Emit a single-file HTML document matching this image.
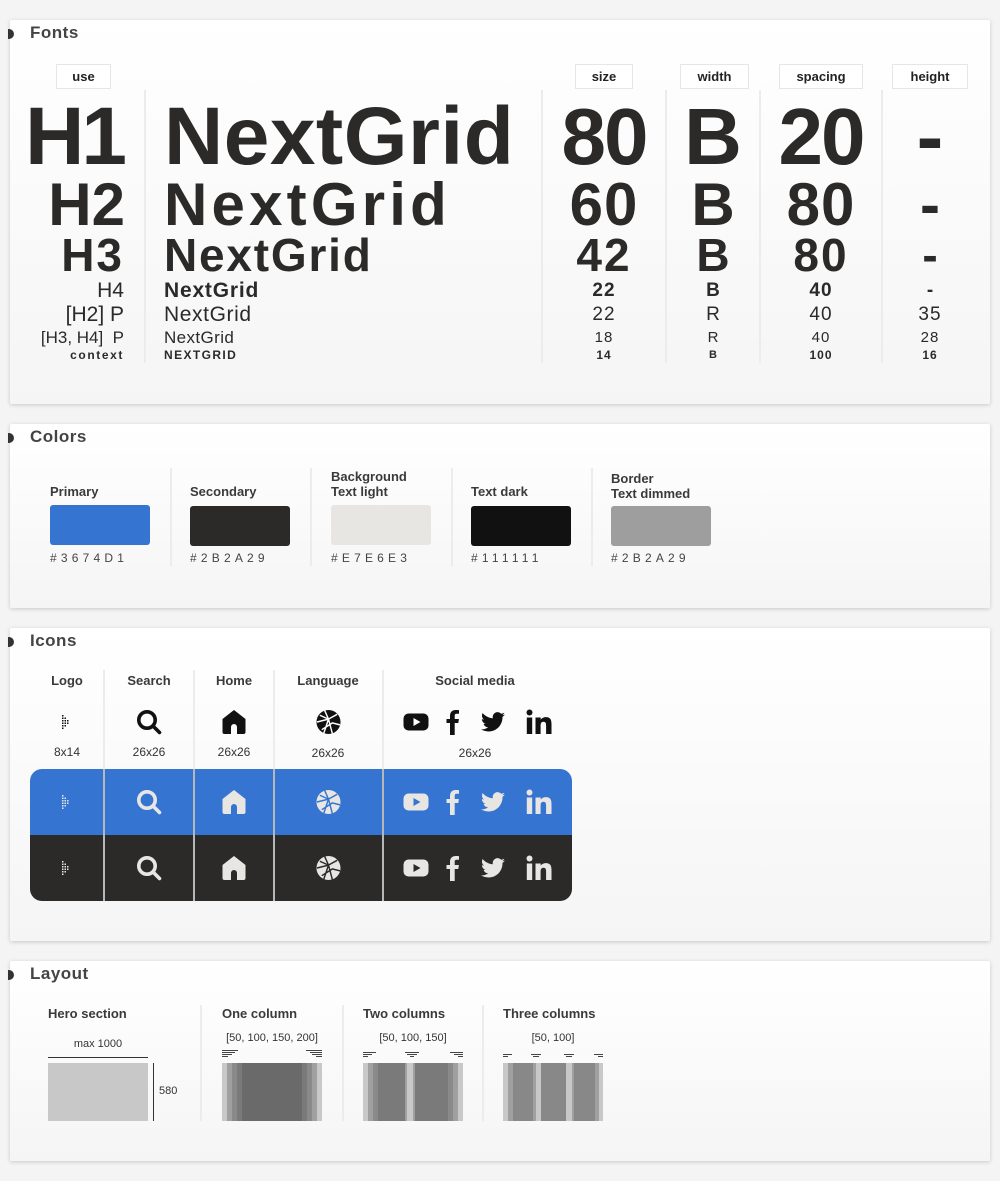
<!DOCTYPE html>
<html><head><meta charset="utf-8">
<style>
*{margin:0;padding:0;box-sizing:border-box}
body{width:1000px;height:1181px;background:#f4f4f4;font-family:"Liberation Sans",sans-serif;color:#2b2a29;position:relative;overflow:hidden}
.card{position:absolute;left:10px;width:980px;background:linear-gradient(#fff,#f5f5f5);box-shadow:0 1px 4px rgba(0,0,0,.18);border-radius:2px}
.ttl{position:absolute;left:20px;top:3px;font-size:17px;font-weight:bold;color:#444;letter-spacing:.5px}
.dot{position:absolute;left:-2px;top:9px;width:6px;height:10px;border-radius:0 5px 5px 0;background:#333}
.a{position:absolute;white-space:nowrap}
.tag{position:absolute;border:1px solid #e6e6e6;background:#fff;font-size:13px;font-weight:bold;text-align:center;line-height:23px;height:25px;color:#222}
.vl{position:absolute;width:2px;background:#ececec}
.b{font-weight:bold}
.r{text-align:right}
.c{text-align:center}
.lab{position:absolute;font-size:13px;font-weight:bold;color:#3a3a3a;line-height:15px}
.hex{position:absolute;font-size:12px;letter-spacing:4.2px;color:#444}
.sw{position:absolute;width:100px;height:40px;border-radius:3px}
.small{position:absolute;font-size:12px;color:#333;text-align:center}
svg{position:absolute}
</style></head><body>
<svg width="0" height="0" style="position:absolute">
<defs>
<symbol id="logo" viewBox="0 0 8 14"><g fill="currentColor"><rect x="0" y="0" width="1.5" height="1.5"/><rect x="0" y="2.5" width="1.5" height="1.5"/><rect x="0" y="5" width="1.5" height="1.5"/><rect x="0" y="7.5" width="1.5" height="1.5"/><rect x="0" y="10" width="1.5" height="1.5"/><rect x="0" y="12.5" width="1.5" height="1.5"/><rect x="2.5" y="2.5" width="1.5" height="1.5"/><rect x="2.5" y="5" width="1.5" height="1.5"/><rect x="2.5" y="7.5" width="1.5" height="1.5"/><rect x="2.5" y="10" width="1.5" height="1.5"/><rect x="5" y="5" width="1.5" height="1.5"/><rect x="5" y="7.5" width="1.5" height="1.5"/></g></symbol>
<symbol id="search" viewBox="0 0 26 26"><circle cx="11" cy="11" r="8.2" fill="none" stroke="currentColor" stroke-width="3.6"/><path d="M17 17l6.5 6.5" stroke="currentColor" stroke-width="3.6" stroke-linecap="round"/></symbol>
<symbol id="home" viewBox="0 0 26 26"><path fill="currentColor" d="M13 1L1.5 10V23a2 2 0 0 0 2 2h6.5v-7a3 3 0 0 1 6 0v7h6.5a2 2 0 0 0 2-2V10z"/></symbol>
<symbol id="globe" viewBox="0 0 26 26"><circle cx="13" cy="13" r="12.5" fill="currentColor"/><g stroke="var(--bg)" stroke-width="1.5" fill="none"><path d="M4 6l9 4 9-5M1 13l12-3 4 15M13 10l-5 15M6 21l11-7 8 2M9 1l4 9"/></g></symbol>
<symbol id="yt" viewBox="0 0 26 26"><rect x="0.5" y="4.5" width="25" height="17" rx="5" fill="currentColor"/><path d="M10.5 9v8l7-4z" fill="var(--bg)"/></symbol>
<symbol id="fb" viewBox="0 0 26 26"><path fill="currentColor" d="M10 26V14H6.5V10H10V7c0-4 2.2-6 5.8-6 1.6 0 3 .1 3.2.2v3.6h-2.2c-1.8 0-2.1.8-2.1 2.1V10h4.2l-.6 4H14.7v12z"/></symbol>
<symbol id="tw" viewBox="0 0 26 26"><path fill="currentColor" d="M25 5.5c-.9.4-1.8.6-2.8.8 1-.6 1.8-1.6 2.1-2.7-1 .6-2 1-3.1 1.2a4.9 4.9 0 0 0-8.4 4.5C8.7 9 5 7 2.6 4a4.9 4.9 0 0 0 1.5 6.6c-.8 0-1.6-.3-2.2-.6 0 2.400 1.7 4.4 3.9 4.8-.7.2-1.5.2-2.2.1.6 2 2.4 3.4 4.6 3.4A9.900 9.900 0 0 1 1 20.3 14 14 0 0 0 8.5 22.5c9 0 14-7.5 14-14v-.6c1-.7 1.8-1.5 2.5-2.4z"/></symbol>
<symbol id="li" viewBox="0 0 26 26"><g fill="currentColor"><circle cx="3.5" cy="3.5" r="3"/><rect x="0.8" y="8.5" width="5.4" height="16.5"/><path d="M9.5 8.5h5.2v2.3c.8-1.4 2.6-2.7 5.2-2.7 5 0 5.6 3.3 5.6 7.5V25h-5.4v-8c0-2-.1-4.2-2.6-4.2s-2.900 2-2.900 4.1V25H9.5z"/></g></symbol>
</defs></svg>

<!-- FONTS -->
<div class="card" style="top:20px;height:384px">
<div class="dot"></div><div class="ttl">Fonts</div>
</div>
<div class="tag" style="left:56px;top:64px;width:55px">use</div>
<div class="tag" style="left:575px;top:64px;width:58px">size</div>
<div class="tag" style="left:680px;top:64px;width:69px">width</div>
<div class="tag" style="left:779px;top:64px;width:84px">spacing</div>
<div class="tag" style="left:892px;top:64px;width:76px">height</div>
<div class="vl" style="left:144px;top:90px;height:273px"></div>
<div class="vl" style="left:541px;top:90px;height:273px"></div>
<div class="vl" style="left:665px;top:90px;height:273px"></div>
<div class="vl" style="left:759px;top:90px;height:273px"></div>
<div class="vl" style="left:881px;top:90px;height:273px"></div>

<div class="a b r" style="right:876px;top:92px;font-size:82px;line-height:90px;letter-spacing:-3px">H1</div>
<div class="a b" style="left:164px;top:92px;font-size:82px;line-height:90px;letter-spacing:.5px">NextGrid</div>
<div class="a b c" style="left:543px;width:122px;top:92px;font-size:80px;line-height:90px;letter-spacing:-2px">80</div>
<div class="a b c" style="left:667px;width:92px;top:92px;font-size:80px;line-height:90px">B</div>
<div class="a b c" style="left:761px;width:120px;top:92px;font-size:80px;line-height:90px;letter-spacing:-2px">20</div>
<div class="a b c" style="left:883px;width:94px;top:92px;font-size:80px;line-height:90px">-</div>

<div class="a b r" style="right:875px;top:173px;font-size:60px;line-height:64px">H2</div>
<div class="a b" style="left:164px;top:173px;font-size:60px;line-height:64px;letter-spacing:4.2px">NextGrid</div>
<div class="a b c" style="left:543px;width:122px;top:173px;font-size:60px;line-height:64px;letter-spacing:1px">60</div>
<div class="a b c" style="left:667px;width:92px;top:173px;font-size:60px;line-height:64px">B</div>
<div class="a b c" style="left:761px;width:120px;top:173px;font-size:60px;line-height:64px;letter-spacing:1px">80</div>
<div class="a b c" style="left:883px;width:94px;top:173px;font-size:60px;line-height:64px">-</div>

<div class="a b r" style="right:876px;top:231px;font-size:46px;line-height:48px;letter-spacing:2px">H3</div>
<div class="a b" style="left:164px;top:231px;font-size:46px;line-height:48px;letter-spacing:1.8px">NextGrid</div>
<div class="a b c" style="left:543px;width:122px;top:231px;font-size:46px;line-height:48px;letter-spacing:2px">42</div>
<div class="a b c" style="left:667px;width:92px;top:231px;font-size:46px;line-height:48px">B</div>
<div class="a b c" style="left:761px;width:120px;top:231px;font-size:46px;line-height:48px;letter-spacing:2px">80</div>
<div class="a b c" style="left:883px;width:94px;top:231px;font-size:46px;line-height:48px">-</div>

<div class="a r" style="right:876px;top:280px;font-size:21px;line-height:22px">H4</div>
<div class="a b" style="left:164px;top:280px;font-size:21px;line-height:22px;letter-spacing:.8px">NextGrid</div>
<div class="a b c" style="left:543px;width:122px;top:280px;font-size:19px;line-height:22px;letter-spacing:1px">22</div>
<div class="a b c" style="left:667px;width:92px;top:280px;font-size:19px;line-height:22px">B</div>
<div class="a b c" style="left:761px;width:120px;top:280px;font-size:19px;line-height:22px;letter-spacing:1px">40</div>
<div class="a b c" style="left:883px;width:94px;top:280px;font-size:19px;line-height:22px">-</div>

<div class="a r" style="right:876px;top:304px;font-size:21px;line-height:22px">[H2] P</div>
<div class="a" style="left:164px;top:304px;font-size:21px;line-height:22px;letter-spacing:.6px">NextGrid</div>
<div class="a c" style="left:543px;width:122px;top:304px;font-size:19px;line-height:22px;letter-spacing:1px">22</div>
<div class="a c" style="left:667px;width:92px;top:304px;font-size:19px;line-height:22px">R</div>
<div class="a c" style="left:761px;width:120px;top:304px;font-size:19px;line-height:22px;letter-spacing:1px">40</div>
<div class="a c" style="left:883px;width:94px;top:304px;font-size:19px;line-height:22px;letter-spacing:1px">35</div>

<div class="a r" style="right:876px;top:328px;font-size:17px;line-height:19px">[H3, H4]&nbsp; P</div>
<div class="a" style="left:164px;top:328px;font-size:17px;line-height:19px;letter-spacing:.4px">NextGrid</div>
<div class="a c" style="left:543px;width:122px;top:329px;font-size:15px;line-height:17px;letter-spacing:1px">18</div>
<div class="a c" style="left:667px;width:92px;top:329px;font-size:15px;line-height:17px">R</div>
<div class="a c" style="left:761px;width:120px;top:329px;font-size:15px;line-height:17px;letter-spacing:1px">40</div>
<div class="a c" style="left:883px;width:94px;top:329px;font-size:15px;line-height:17px;letter-spacing:1px">28</div>

<div class="a b r" style="right:876px;top:348px;font-size:12px;line-height:14px;letter-spacing:1.6px">context</div>
<div class="a b" style="left:164px;top:348px;font-size:12px;line-height:14px;letter-spacing:1.4px">NEXTGRID</div>
<div class="a b c" style="left:543px;width:122px;top:348px;font-size:12px;line-height:14px;letter-spacing:1px">14</div>
<div class="a b c" style="left:667px;width:92px;top:348px;font-size:11px;line-height:14px">B</div>
<div class="a b c" style="left:761px;width:120px;top:348px;font-size:12px;line-height:14px;letter-spacing:1px">100</div>
<div class="a b c" style="left:883px;width:94px;top:348px;font-size:12px;line-height:14px;letter-spacing:1px">16</div>

<!-- COLORS -->
<div class="card" style="top:424px;height:184px">
<div class="dot"></div><div class="ttl">Colors</div>
</div>
<div class="vl" style="left:170px;top:468px;height:98px"></div>
<div class="vl" style="left:310px;top:468px;height:98px"></div>
<div class="vl" style="left:451px;top:468px;height:98px"></div>
<div class="vl" style="left:591px;top:468px;height:98px"></div>
<div class="lab" style="left:50px;top:484px">Primary</div>
<div class="lab" style="left:190px;top:484px">Secondary</div>
<div class="lab" style="left:331px;top:469px">Background<br>Text light</div>
<div class="lab" style="left:471px;top:484px">Text dark</div>
<div class="lab" style="left:611px;top:471px">Border<br>Text dimmed</div>
<div class="sw" style="left:50px;top:505px;background:#3674d1"></div>
<div class="sw" style="left:190px;top:506px;background:#2b2a29"></div>
<div class="sw" style="left:331px;top:505px;background:#e7e6e3"></div>
<div class="sw" style="left:471px;top:506px;background:#111"></div>
<div class="sw" style="left:611px;top:506px;background:#9e9e9e"></div>
<div class="hex" style="left:50px;top:551px">#3674D1</div>
<div class="hex" style="left:190px;top:551px">#2B2A29</div>
<div class="hex" style="left:331px;top:551px">#E7E6E3</div>
<div class="hex" style="left:471px;top:551px">#111111</div>
<div class="hex" style="left:611px;top:551px">#2B2A29</div>

<!-- ICONS -->
<div class="card" style="top:628px;height:313px">
<div class="dot"></div><div class="ttl">Icons</div>
</div>
<div class="vl" style="left:103px;top:670px;height:100px"></div>
<div class="vl" style="left:193px;top:670px;height:100px"></div>
<div class="vl" style="left:273px;top:670px;height:100px"></div>
<div class="vl" style="left:382px;top:670px;height:100px"></div>
<div class="lab c" style="left:30px;width:74px;top:673px">Logo</div>
<div class="lab c" style="left:104px;width:90px;top:673px">Search</div>
<div class="lab c" style="left:194px;width:80px;top:673px">Home</div>
<div class="lab c" style="left:274px;width:108px;top:673px">Language</div>
<div class="lab c" style="left:383px;width:184px;top:673px">Social media</div>
<div style="color:#111;--bg:#fff">
<svg style="left:62px;top:715px" width="8" height="14"><use href="#logo"/></svg>
<svg style="left:136px;top:709px" width="26" height="26"><use href="#search"/></svg>
<svg style="left:221px;top:709px" width="26" height="26"><use href="#home"/></svg>
<svg style="left:316px;top:709px" width="25" height="26"><use href="#globe"/></svg>
<svg style="left:403px;top:709px" width="26" height="26"><use href="#yt"/></svg>
<svg style="left:440px;top:709px" width="26" height="26"><use href="#fb"/></svg>
<svg style="left:480px;top:709px" width="26" height="26"><use href="#tw"/></svg>
<svg style="left:526px;top:709px" width="26" height="26"><use href="#li"/></svg>
</div>
<div class="small" style="left:30px;width:74px;top:745px">8x14</div>
<div class="small" style="left:104px;width:90px;top:745px">26x26</div>
<div class="small" style="left:194px;width:80px;top:745px">26x26</div>
<div class="small" style="left:274px;width:108px;top:746px">26x26</div>
<div class="small" style="left:383px;width:184px;top:746px">26x26</div>

<div style="position:absolute;left:30px;top:769px;width:542px;height:132px;border-radius:12px;overflow:hidden">
<div style="height:66px;background:#3674d1"></div><div style="height:66px;background:#2b2a29"></div>
</div>
<div style="position:absolute;left:103px;top:769px;width:2px;height:132px;background:#b7b7b7"></div>
<div style="position:absolute;left:193px;top:769px;width:2px;height:132px;background:#b7b7b7"></div>
<div style="position:absolute;left:273px;top:769px;width:2px;height:132px;background:#b7b7b7"></div>
<div style="position:absolute;left:382px;top:769px;width:2px;height:132px;background:#b7b7b7"></div>
<div style="color:#e7e6e3;--bg:#3674d1">
<svg style="left:62px;top:795px" width="8" height="14"><use href="#logo"/></svg>
<svg style="left:136px;top:789px" width="26" height="26"><use href="#search"/></svg>
<svg style="left:221px;top:789px" width="26" height="26"><use href="#home"/></svg>
<svg style="left:316px;top:789px" width="25" height="26"><use href="#globe"/></svg>
<svg style="left:403px;top:789px" width="26" height="26"><use href="#yt"/></svg>
<svg style="left:440px;top:789px" width="26" height="26"><use href="#fb"/></svg>
<svg style="left:480px;top:789px" width="26" height="26"><use href="#tw"/></svg>
<svg style="left:526px;top:789px" width="26" height="26"><use href="#li"/></svg>
</div>
<div style="color:#e7e6e3;--bg:#2b2a29">
<svg style="left:62px;top:861px" width="8" height="14"><use href="#logo"/></svg>
<svg style="left:136px;top:855px" width="26" height="26"><use href="#search"/></svg>
<svg style="left:221px;top:855px" width="26" height="26"><use href="#home"/></svg>
<svg style="left:316px;top:855px" width="25" height="26"><use href="#globe"/></svg>
<svg style="left:403px;top:855px" width="26" height="26"><use href="#yt"/></svg>
<svg style="left:440px;top:855px" width="26" height="26"><use href="#fb"/></svg>
<svg style="left:480px;top:855px" width="26" height="26"><use href="#tw"/></svg>
<svg style="left:526px;top:855px" width="26" height="26"><use href="#li"/></svg>
</div>

<!-- LAYOUT -->
<div class="card" style="top:961px;height:200px">
<div class="dot"></div><div class="ttl">Layout</div>
</div>
<div class="vl" style="left:200px;top:1005px;height:116px"></div>
<div class="vl" style="left:342px;top:1005px;height:116px"></div>
<div class="vl" style="left:482px;top:1005px;height:116px"></div>
<div class="lab" style="left:48px;top:1006px">Hero section</div>
<div class="lab" style="left:222px;top:1006px">One column</div>
<div class="lab" style="left:363px;top:1006px">Two columns</div>
<div class="lab" style="left:503px;top:1006px">Three columns</div>
<div class="small" style="left:48px;width:100px;top:1038px;font-size:11px">max 1000</div>
<div style="position:absolute;left:48px;top:1057px;width:100px;height:1px;background:#333"></div>
<div style="position:absolute;left:48px;top:1063px;width:100px;height:58px;background:#c8c8c8"></div>
<div style="position:absolute;left:153px;top:1063px;width:1px;height:58px;background:#333"></div>
<div class="a" style="left:159px;top:1085px;font-size:11px;color:#333">580</div>
<div class="small" style="left:212px;width:120px;top:1032px;font-size:11px">[50, 100, 150, 200]</div>
<div class="small" style="left:353px;width:120px;top:1032px;font-size:11px">[50, 100, 150]</div>
<div class="small" style="left:493px;width:120px;top:1032px;font-size:11px">[50, 100]</div>
<svg style="left:222px;top:1050px" width="100" height="8"><g stroke="#444" stroke-width="1"><path d="M0 .5h16M0 2.5h13M0 4.5h10M0 6.5h6M84 .5h16M88 2.5h12M90 4.5h10M94 6.5h6"/></g></svg>
<svg style="left:363px;top:1052px" width="100" height="6"><g stroke="#444" stroke-width="1"><path d="M0 .5h13M0 2.5h9M0 4.5h5M42 .5h14M44 2.5h10M47 4.5h4M87 .5h13M91 2.5h9M95 4.5h5"/></g></svg>
<svg style="left:503px;top:1054px" width="100" height="4"><g stroke="#444" stroke-width="1"><path d="M0 .5h9M0 2.5h5M28 .5h10M30 2.5h6M61 .5h10M63 2.5h6M91 .5h9M95 2.5h5"/></g></svg>
<div style="position:absolute;left:222px;top:1063px;width:100px;height:58px;background:linear-gradient(90deg,#c8c8c8 0 5px,#a0a0a0 5px 10px,#8a8a8a 10px 15px,#7a7a7a 15px 20px,#6a6a6a 20px 80px,#7a7a7a 80px 85px,#8a8a8a 85px 90px,#a0a0a0 90px 95px,#c8c8c8 95px)"></div>
<div style="position:absolute;left:363px;top:1063px;width:100px;height:58px;background:linear-gradient(90deg,#c8c8c8 0 5px,#a0a0a0 5px 10px,#8a8a8a 10px 15px,#7a7a7a 15px 42px,#a0a0a0 42px 44px,#c8c8c8 44px 50px,#a0a0a0 50px 52px,#7a7a7a 52px 85px,#8a8a8a 85px 90px,#a0a0a0 90px 95px,#c8c8c8 95px)"></div>
<div style="position:absolute;left:503px;top:1063px;width:100px;height:58px;background:linear-gradient(90deg,#c8c8c8 0 5px,#a0a0a0 5px 10px,#888 10px 30px,#a0a0a0 30px 33px,#c8c8c8 33px 38px,#888 38px 63px,#c8c8c8 63px 69px,#a0a0a0 69px 71px,#888 71px 92px,#a0a0a0 92px 96px,#c8c8c8 96px)"></div>
</body></html>
